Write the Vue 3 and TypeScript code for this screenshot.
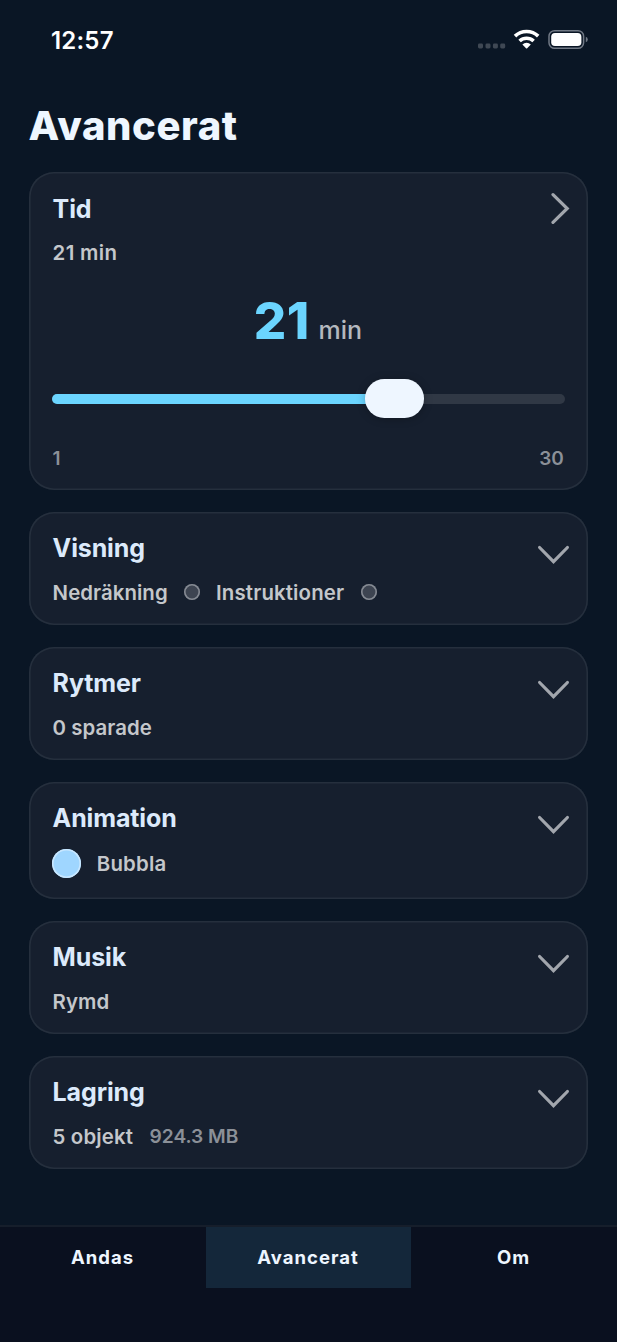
<script setup lang="ts">
import { ref } from 'vue'

interface Section {
  title: string
  kind: 'toggles' | 'text' | 'animation' | 'storage'
  text?: string
  extra?: string
}

const minutes = ref(21)
const maxMinutes = 30
const activeTab = ref('Avancerat')
const tabs = ['Andas', 'Avancerat', 'Om']
const toggles = ['Nedräkning', 'Instruktioner']

const sections: Section[] = [
  { title: 'Visning', kind: 'toggles' },
  { title: 'Rytmer', kind: 'text', text: '0 sparade' },
  { title: 'Animation', kind: 'animation', text: 'Bubbla' },
  { title: 'Musik', kind: 'text', text: 'Rymd' },
  { title: 'Lagring', kind: 'storage', text: '5 objekt', extra: '924.3 MB' },
]
</script>

<template>
  <div class="screen">
    <header class="status">
      <span class="clock">12:57</span>
      <svg class="status-icons" width="112" height="24" viewBox="477 27 112 24">
        <g fill="#3f4854">
          <rect x="478" y="43.6" width="5" height="4.9" rx="1.4" />
          <rect x="485.5" y="43.6" width="5" height="4.9" rx="1.4" />
          <rect x="492.9" y="43.6" width="5" height="4.9" rx="1.4" />
          <rect x="500.2" y="43.6" width="5" height="4.9" rx="1.4" />
        </g>
        <g fill="none" stroke="#fff" stroke-width="3.6">
          <path d="M515 36.1a16.8 16.8 0 0 1 23.2 0" />
          <path d="M519.6 41a10.2 10.2 0 0 1 14 0" />
        </g>
        <path d="M522.4 44.4a6 6 0 0 1 8.4 0l-3.6 3.8q-.6.6-1.2 0z" fill="#fff" />
        <rect x="549" y="30.7" width="34.6" height="17.6" rx="5.6" fill="none" stroke="#717985" stroke-width="1.5" />
        <rect x="551.2" y="32.9" width="30.2" height="13.2" rx="3.8" fill="#fff" />
        <path d="M585.8 36.7q2 .8 2 2.8t-2 2.8z" fill="#717985" />
      </svg>
    </header>

    <h1 class="title">Avancerat</h1>

    <main class="cards">
      <section class="card time">
        <div class="head">
          <div>
            <h2>Tid</h2>
            <p class="sub">{{ minutes }} min</p>
          </div>
          <svg class="chevron side" width="20" height="34" viewBox="0 0 20 34">
            <path d="M2 2.6 16.2 16.5 2 30.4" />
          </svg>
        </div>
        <div class="value">
          <strong>{{ minutes }}</strong><span>min</span>
        </div>
        <div class="slider">
          <div class="fill" :style="{ width: ((minutes - 1) / (maxMinutes - 1)) * 100 + '%' }"></div>
          <div class="thumb"></div>
        </div>
        <div class="range"><span>1</span><span>{{ maxMinutes }}</span></div>
      </section>

      <section v-for="s in sections" :key="s.title" class="card" :class="s.kind">
        <div class="head">
          <div>
            <h2>{{ s.title }}</h2>
            <div class="sub row">
              <template v-if="s.kind === 'toggles'">
                <template v-for="t in toggles" :key="t">
                  <span>{{ t }}</span><i class="dot"></i>
                </template>
              </template>
              <template v-else>
                <i v-if="s.kind === 'animation'" class="bubble"></i>
                <span>{{ s.text }}</span>
                <span v-if="s.extra" class="extra">{{ s.extra }}</span>
              </template>
            </div>
          </div>
          <svg class="chevron" width="34" height="20" viewBox="0 0 34 20">
            <path d="M3.6 3.5 17.5 17.7 31.4 3.5" />
          </svg>
        </div>
      </section>
    </main>

    <nav class="tabs">
      <button
        v-for="t in tabs"
        :key="t"
        type="button"
        :class="{ active: t === activeTab }"
        @click="activeTab = t"
      >{{ t }}</button>
    </nav>
  </div>
</template>

<style>
html,
body {
  margin: 0;
  background: #0a1625;
}
</style>

<style scoped>
.screen {
  width: 617px;
  height: 1342px;
  box-sizing: border-box;
  display: flex;
  flex-direction: column;
  overflow: hidden;
  background: #0a1625;
  color: #eef6ff;
  font-family: Inter, "Liberation Sans", sans-serif;
}
.status {
  height: 80px;
  box-sizing: border-box;
  padding: 0 28px 0 51px;
  display: flex;
  align-items: flex-start;
  justify-content: space-between;
}
.clock {
  margin-top: 26px;
  font-size: 24px;
  line-height: 30px;
  font-weight: 600;
  letter-spacing: 0.2px;
  color: #fff;
}
.status-icons {
  margin-top: 27px;
}
.title {
  margin: 20px 0 0 28.5px;
  height: 72px;
  font-size: 40px;
  line-height: 52px;
  font-weight: 800;
  letter-spacing: 0.6px;
}
.cards {
  flex: 1;
  padding: 0 29px;
  display: flex;
  flex-direction: column;
  gap: 22px;
}
.card {
  height: 113px;
  flex: none;
  box-sizing: border-box;
  padding: 20px 18px 0 23.6px;
  border-radius: 25px;
  background: #161f2e;
  box-shadow: inset 0 0 0 1.6px #252f3d;
}
.card.time {
  height: 318px;
  padding-top: 21px;
}
.card.animation {
  height: 117px;
}
.head {
  display: flex;
  justify-content: space-between;
}
h2 {
  margin: 0;
  font-size: 25px;
  line-height: 32px;
  font-weight: 700;
  letter-spacing: -0.12px;
  color: #dceafb;
}
.sub {
  margin: 15px 0 0;
  font-size: 20.4px;
  line-height: 28px;
  font-weight: 600;
  letter-spacing: 0.06px;
  color: #c4c7cb;
}
.time .sub {
  margin-top: 14px;
  letter-spacing: 0.35px;
}
.row {
  display: flex;
  align-items: center;
}
.toggles .row span:nth-of-type(2) {
  letter-spacing: 0.15px;
}
.animation .row {
  margin-top: 15px;
  letter-spacing: 0.2px;
}
.chevron {
  margin-top: 12px;
  fill: none;
  stroke: #a2a6ad;
  stroke-width: 3.2;
  stroke-linecap: round;
}
.chevron.side {
  margin: -1px -1px 0 0;
}
.dot {
  width: 16.4px;
  height: 16.4px;
  box-sizing: border-box;
  margin: 0 15.6px 2px 16.3px;
  border-radius: 50%;
  background: #3d4451;
  box-shadow: inset 0 0 0 1.6px #858a93;
}
.bubble {
  width: 29px;
  height: 29px;
  box-sizing: border-box;
  margin-right: 15.8px;
  margin-left: -0.6px;
  border-radius: 50%;
  background: #9fd6ff;
  box-shadow: inset 0 0 0 1.6px #c9e7ff;
}
.storage .row {
  letter-spacing: 0.15px;
}
.row .extra {
  margin: -1px 0 1px 16.5px;
  font-size: 19.2px;
  letter-spacing: -0.05px;
  color: #8b9098;
}
.value {
  margin-top: 23px;
  height: 62px;
  padding-right: 7px;
  display: flex;
  justify-content: center;
  align-items: baseline;
  line-height: 62px;
}
.value strong {
  font-size: 51px;
  font-weight: 800;
  letter-spacing: 0.4px;
  color: #6bd5ff;
}
.value span {
  margin-left: 9px;
  font-size: 25px;
  font-weight: 500;
  letter-spacing: -0.1px;
  color: #b4b8be;
}
.slider {
  position: relative;
  height: 10px;
  width: 513px;
  margin: 41.5px 0 0 -0.6px;
  border-radius: 5px;
  background: #303845;
}
.fill {
  height: 10px;
  max-width: 330px;
  border-radius: 5px 0 0 5px;
  background: #6bd5ff;
}
.thumb {
  position: absolute;
  left: 313.2px;
  top: -14.6px;
  width: 58.6px;
  height: 38.6px;
  border-radius: 19.3px;
  background: #eef6ff;
  box-shadow: 0 1px 9px rgba(0, 0, 0, 0.25);
}
.range {
  margin-top: 42px;
  width: 511px;
  display: flex;
  justify-content: space-between;
  font-size: 19px;
  line-height: 26px;
  font-weight: 600;
  letter-spacing: -0.2px;
  color: #8b9098;
}
.tabs {
  height: 117px;
  flex: none;
  box-sizing: border-box;
  border-top: 2px solid #161e2b;
  background: #0a101f;
  display: grid;
  grid-template-columns: 206px 205px 206px;
  align-items: start;
}
button {
  height: 61px;
  margin: 0;
  padding: 0 1px 2px 0;
  border: 0;
  background: none;
  color: #eef6ff;
  font: 700 18.5px/58px Inter, "Liberation Sans", sans-serif;
  letter-spacing: 1px;
}
button.active {
  background: #14273a;
}
</style>
